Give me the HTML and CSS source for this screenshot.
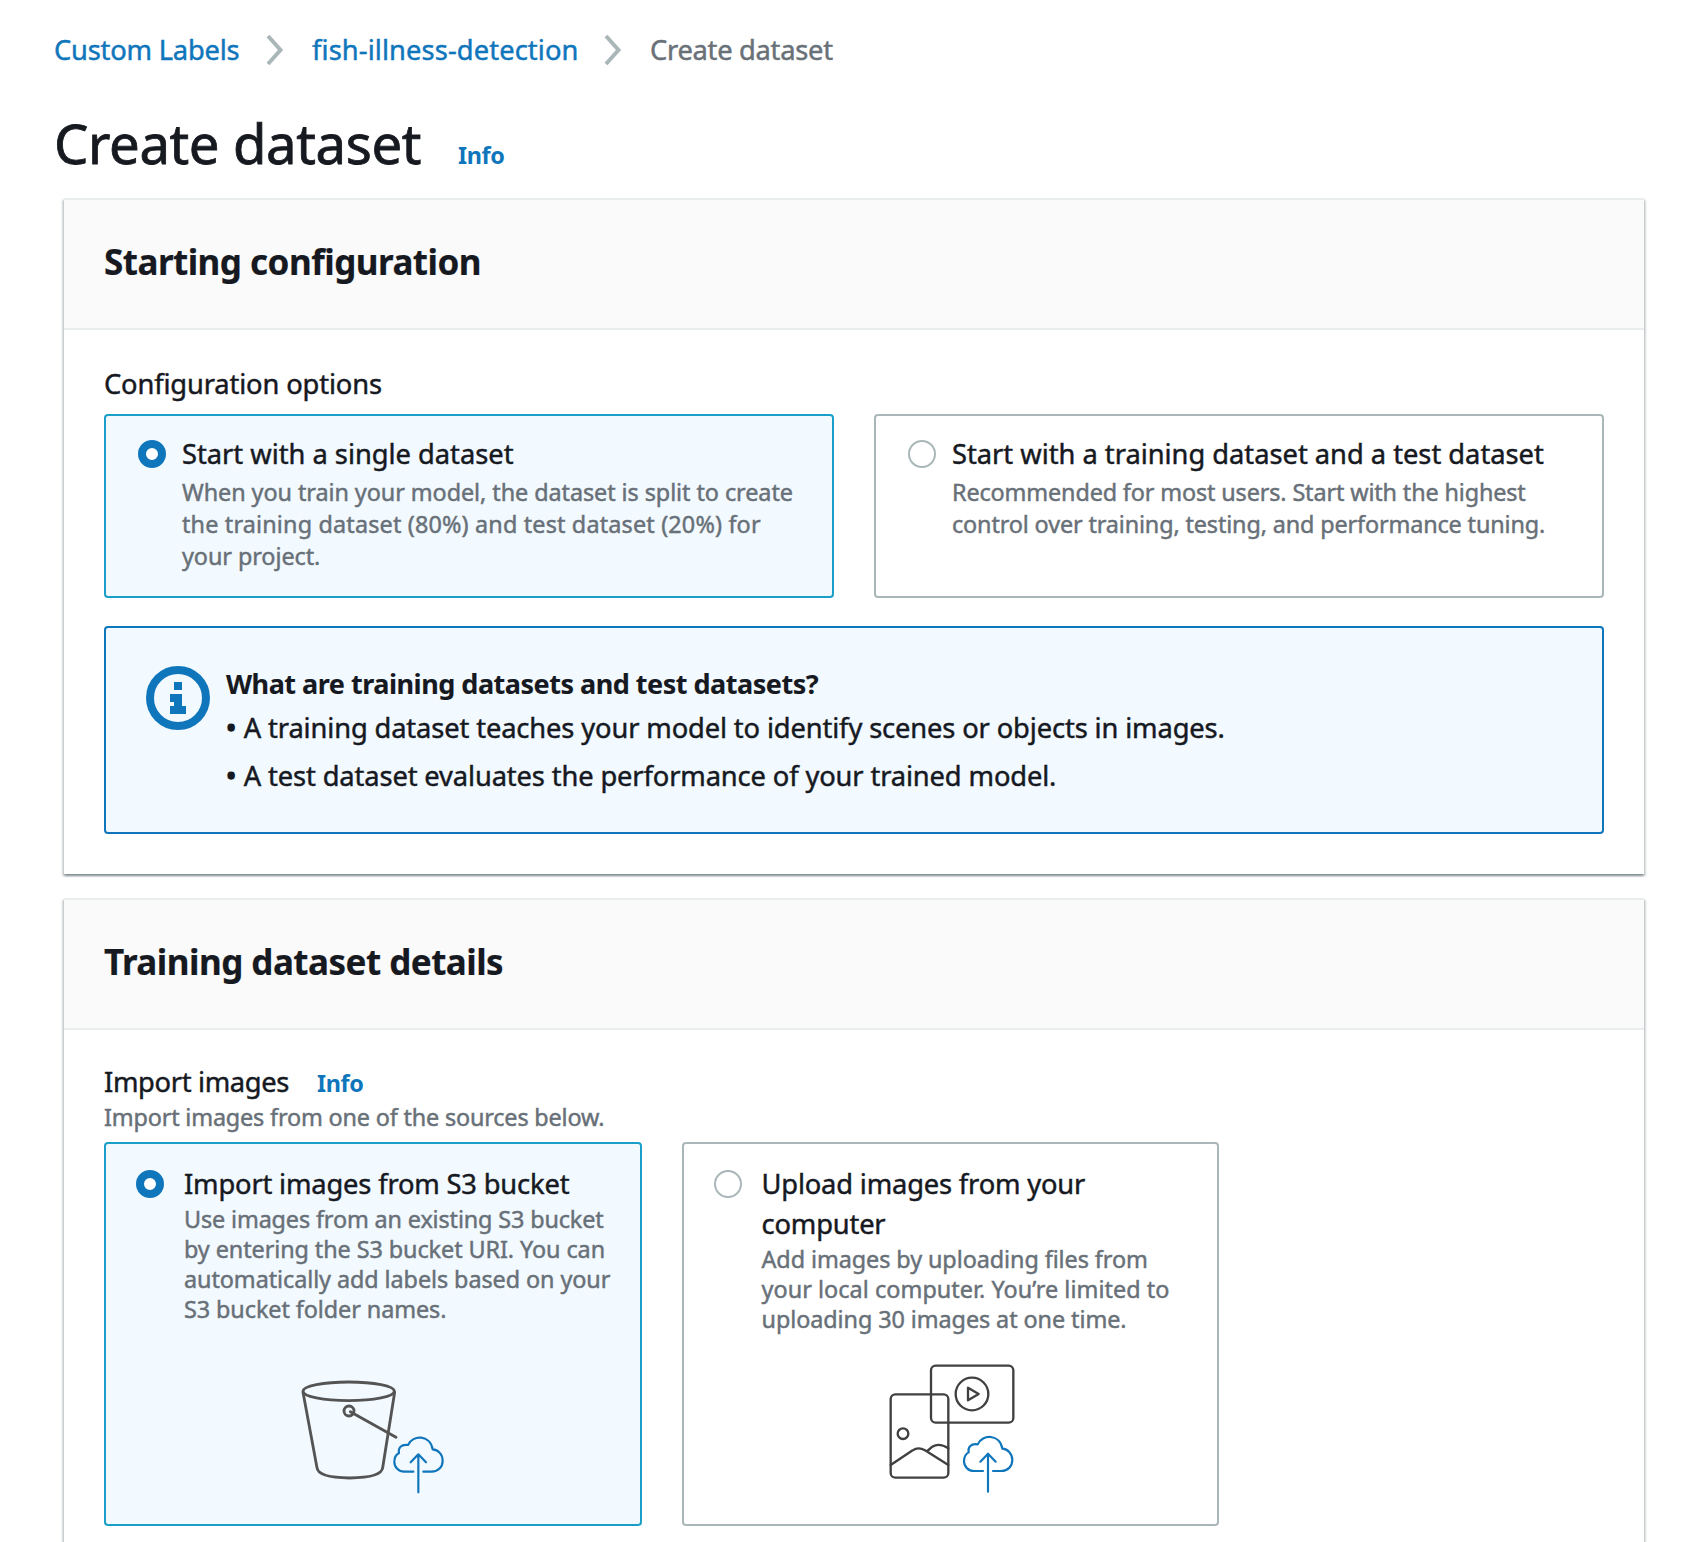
FILE: index.html
```html
<!DOCTYPE html>
<html lang="en">
<head>
<meta charset="utf-8">
<title>Create dataset</title>
<link rel="stylesheet" href="styles.css">
</head>
<body>
<svg class="defs" aria-hidden="true">
  <symbol id="cloud" viewBox="0 0 156 176" overflow="visible">
    <path d="M63 108H36C19 108 6 95 6 78C6 66 11 57 20 52C17 38 25 25 47 28C61 -4 114 -3 121 41C138 42 151 57 151 75C151 94 137 108 118 108H93"/>
    <path d="M78 170V57M55 80L78 56L101 80"/>
  </symbol>
</svg>
<nav class="crumbs">
  <a class="crumb-a">Custom Labels</a>
  <svg class="chevron" viewBox="0 0 20 32"><path d="M3 2L15.500 16L3 30"/></svg>
  <a class="crumb-b">fish-illness-detection</a>
  <svg class="chevron" viewBox="0 0 20 32"><path d="M3 2L15.500 16L3 30"/></svg>
  <span class="crumb-c">Create dataset</span>
</nav>
<header class="page-head">
  <h1>Create dataset</h1>
  <a class="info">Info</a>
</header>

<section class="panel">
  <div class="panel-head"><h2>Starting configuration</h2></div>
  <div class="panel-body">
    <div class="label">Configuration options</div>
    <div class="tiles tiles-two">
      <div class="tile tile-on">
        <span class="radio radio-on"></span>
        <div>
          <h3>Start with a single dataset</h3>
          <p>When you train your model, the dataset is split to create<br><span class="loose">the training dataset (80%) and test dataset (20%) for</span><br>your project.</p>
        </div>
      </div>
      <div class="tile">
        <span class="radio"></span>
        <div>
          <h3>Start with a training dataset and a test dataset</h3>
          <p class="snug">Recommended for most users. Start with the highest<br>control over training, testing, and performance tuning.</p>
        </div>
      </div>
    </div>
    <div class="alert">
      <svg class="alert-icon" viewBox="0 0 64 64"><circle cx="32" cy="32" r="28"/><path d="M28 16h8v8h-8zM24 28h12v12h4v8H24v-8h4v-4h-4z"/></svg>
      <div>
        <strong>What are training datasets and test datasets?</strong>
        <div class="point"><span class="dot">•</span> A training dataset teaches your model to identify scenes or objects in images.</div>
        <div class="point"><span class="dot">•</span> A test dataset evaluates the performance of your trained model.</div>
      </div>
    </div>
  </div>
</section>

<section class="panel panel-details">
  <div class="panel-head"><h2>Training dataset details</h2></div>
  <div class="panel-body details-body">
    <div class="label-row"><div class="label">Import images</div><a class="info">Info</a></div>
    <p class="hint">Import images from one of the sources below.</p>
    <div class="tiles tiles-three">
      <div class="source source-on">
        <div class="source-top">
          <span class="radio radio-on"></span>
          <div>
            <h3>Import images from S3 bucket</h3>
            <p><span class="snug">Use images from an existing S3 bucket</span><br>by entering the S3 bucket URI. You can<br>automatically add labels based on your<br>S3 bucket folder names.</p>
          </div>
        </div>
        <svg class="art art-bucket" viewBox="0 0 510 450">
          <g class="ink">
            <ellipse cx="176" cy="94" rx="137" ry="28"/>
            <path d="M39 97L81 323Q84 353 179 354Q275 353 278 323L314 97"/>
            <circle cx="177" cy="153" r="15"/>
            <path d="M181 155L318 232"/>
          </g>
          <use class="cloud" href="#cloud" x="307" y="227" width="156" height="176"/>
        </svg>
      </div>
      <div class="source">
        <div class="source-top">
          <span class="radio"></span>
          <div>
            <h3>Upload images from your<br>computer</h3>
            <p>Add images by uploading files from<br><span class="even">your local computer. You’re limited to</span><br>uploading 30 images at one time.</p>
          </div>
        </div>
        <svg class="art art-media" viewBox="0 0 510 450">
          <g class="ink">
            <rect x="183" y="47" width="247" height="171" rx="14"/>
            <circle cx="306" cy="132" r="49"/>
            <path d="M294 113L326 132L294 151Z"/>
            <rect x="62" y="133" width="173" height="250" rx="14"/>
            <circle cx="99" cy="251" r="16"/>
            <path d="M62 345L128 301Q145 289 165 301L235 345M172 303L187 290Q208 277 235 295"/>
          </g>
          <use class="cloud" href="#cloud" x="276" y="255" width="156" height="176"/>
        </svg>
      </div>
    </div>
  </div>
</section>
</body>
</html>
```
FILE: styles.css
```css
* { box-sizing: border-box; }
html, body { height: 1542px; overflow: hidden; }
body {
  margin: 0;
  padding: 30px 40px 0 55px;
  background: #fff;
  color: #16191f;
  font-family: "Noto Sans", "Open Sans", sans-serif;
  font-size: 27.3px;
  line-height: 40px;
  white-space: nowrap;
  -webkit-text-stroke: .45px;
}
.defs { display: block; width: 0; height: 0; }
h1, h2, h3, p { margin: 0; font-weight: 400; }
a { color: #1076bc; }
.crumbs { display: flex; height: 40px; }
.crumb-a { width: 211px; margin-left: -1px; letter-spacing: -.21px; }
.crumb-b { width: 291px; margin-left: -1px; letter-spacing: .1px; }
.crumb-c { margin-left: -1px; color: #687078; letter-spacing: -.28px; }
.chevron { width: 20px; height: 32px; margin: 4px 28px 0 0; fill: none; stroke: #aab7b8; stroke-width: 4; }
.page-head { display: flex; align-items: baseline; height: 66px; margin: 40px 0 22px; }
h1 { width: 404px; margin-left: -1px; font-size: 54.500px; line-height: 66px; letter-spacing: -.4px; -webkit-text-stroke-width: .8px; }
.info { font-size: 23.400px; font-weight: 700; letter-spacing: -.4px; -webkit-text-stroke-width: 0; }
.panel {
  width: 1580px;
  height: 676px;
  margin-left: 9px;
  border-top: 2px solid #eaeded;
  background: #fff;
  box-shadow: 0 2px 2px rgba(0, 28, 36, .3), 2px 2px 2px rgba(0, 28, 36, .15), -2px 2px 2px rgba(0, 28, 36, .15);
}
.panel-details { height: 700px; margin-top: 24px; }
.panel-head { height: 130px; padding: 40px 40px 0; background: #fafafa; border-bottom: 2px solid #eaeded; }
h2 { font-size: 35px; line-height: 44px; font-weight: 700; letter-spacing: -.52px; -webkit-text-stroke-width: .2px; }
.panel-body { padding: 34px 40px 0; }
.label { letter-spacing: -.14px; }
.tiles { display: grid; gap: 40px; }
.tiles-two { grid-template-columns: 1fr 1fr; margin-top: 10px; }
.tile { display: flex; gap: 16px; height: 184px; padding: 18px 0 0 32px; border: 2px solid #aab7b8; border-radius: 4px; }
.tile-on, .source-on { border-color: #1aa0c8; background: #f2f9ff; }
.radio { flex: none; width: 28px; height: 28px; margin-top: 6px; border: 2px solid #aab7b8; border-radius: 50%; background: #fff; }
.radio-on { border: 8px solid #1076bc; }
h3 { font-size: 27.3px; line-height: 40px; }
.tile h3 { letter-spacing: -.02px; }
.tile p { margin-top: 2px; font-size: 23.400px; line-height: 32px; letter-spacing: -.07px; color: #687078; }
.tile .loose { letter-spacing: .16px; }
.tile .snug, .source .snug { letter-spacing: -.14px; }
.alert { display: flex; gap: 16px; height: 208px; margin-top: 28px; padding: 36px 40px; border: 2px solid #1076bc; border-radius: 4px; background: #f2f9ff; }
.alert-icon { width: 64px; height: 64px; margin-top: 2px; fill: #1076bc; }
.alert-icon circle { fill: none; stroke: #1076bc; stroke-width: 8; }
.alert strong { display: block; font-size: 27px; letter-spacing: -.49px; -webkit-text-stroke-width: .1px; }
.point { line-height: 48px; letter-spacing: -.13px; }
.dot { margin-right: .7px; -webkit-text-stroke-width: 1.500px; }
.details-body { padding-top: 32px; }
.label-row { display: flex; align-items: baseline; height: 40px; }
.label-row .label { width: 213px; letter-spacing: -.34px; }
.hint { font-size: 23.400px; line-height: 30px; letter-spacing: -.17px; color: #687078; }
.tiles-three { grid-template-columns: 1fr 1fr; width: 1115px; margin-top: 10px; }
.source { display: flex; flex-direction: column; justify-content: space-between; height: 384px; border: 2px solid #aab7b8; border-radius: 4px; }
.source-on { border-color: #1aa0c8; }
.source-top { display: flex; gap: 20px; padding: 20px 0 0 30px; }
.source h3 { letter-spacing: -.17px; }
.source p { font-size: 23.400px; line-height: 30px; letter-spacing: -.08px; color: #687078; }
.source .even { letter-spacing: .05px; }
.art { flex: none; width: 170px; height: 150px; fill: none; }
.art-bucket { margin: 0 0 14px 184px; }
.art-media { margin: 0 0 24px 186px; }
.ink { stroke: #404040; stroke-width: 7; stroke-linecap: round; stroke-linejoin: round; }
.art-bucket .ink { stroke: #545454; stroke-width: 8.500; }
.cloud { stroke: #1076bc; stroke-width: 6.500; stroke-linecap: round; stroke-linejoin: round; }
```
